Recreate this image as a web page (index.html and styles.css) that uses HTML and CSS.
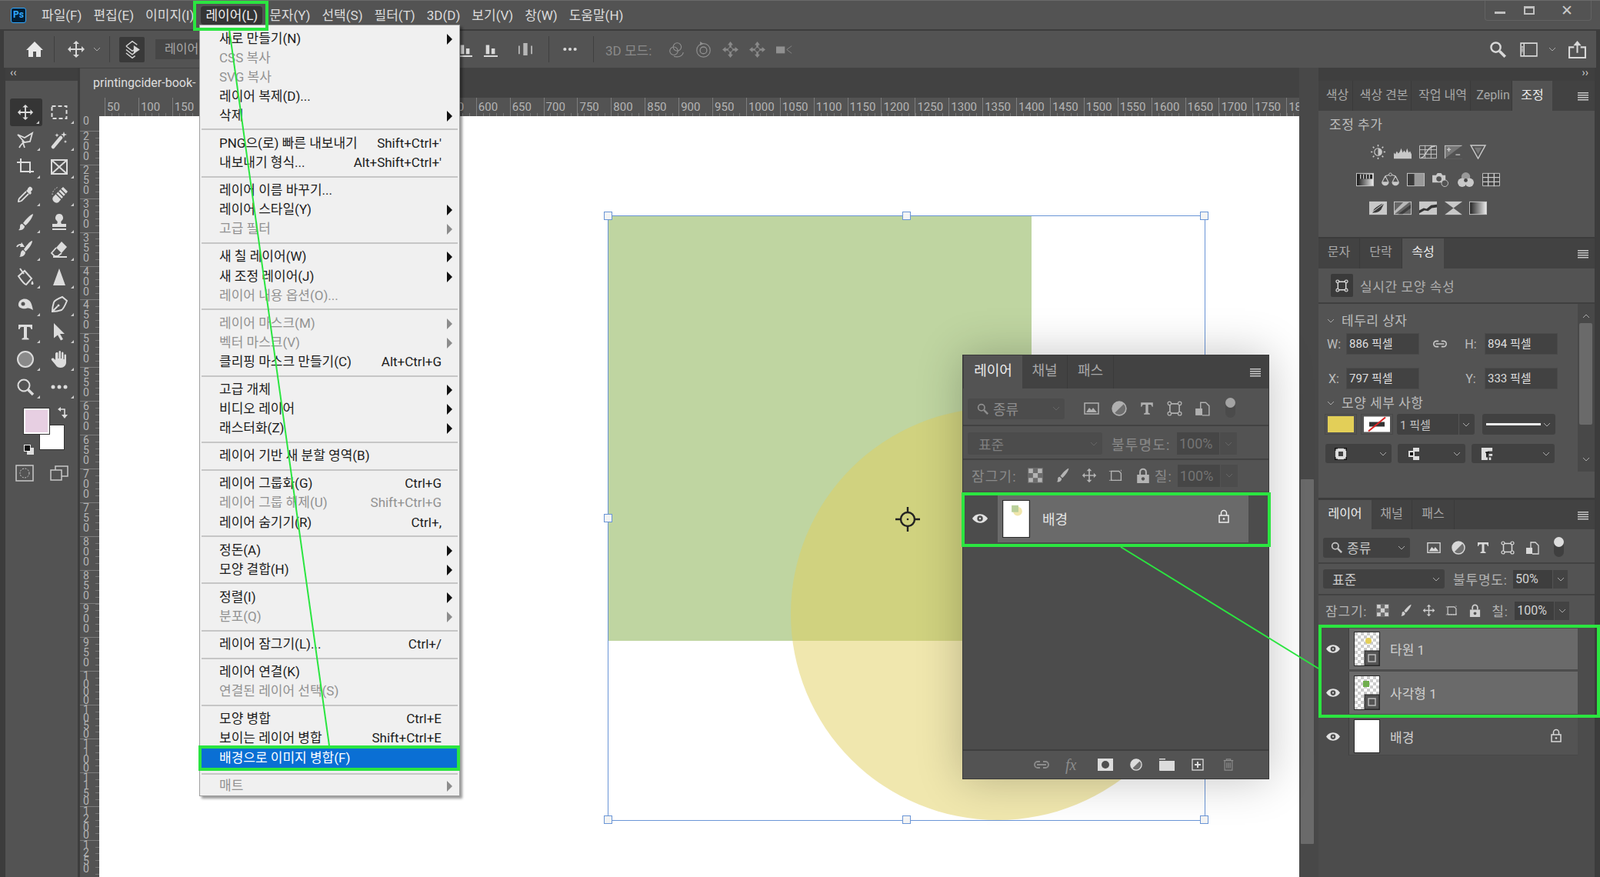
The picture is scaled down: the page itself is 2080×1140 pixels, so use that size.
FILE: index.html
```html
<!DOCTYPE html>
<html lang="ko">
<head>
    <meta charset="UTF-8">
    <title>Photoshop - 배경으로 이미지 병합</title>
    <link rel="stylesheet" href="styles.css">
</head>
<body>
<svg class="sprite" width="0" height="0">
    <defs>
        <pattern id="checker" width="8" height="8" patternUnits="userSpaceOnUse"><rect width="8" height="8" fill="#fff"/><rect width="4" height="4" fill="#ccc"/><rect x="4" y="4" width="4" height="4" fill="#ccc"/></pattern>
    </defs>
    <symbol id="home" viewBox="0 0 24 24"><path fill="currentColor" d="M12 2 1 13h3v9h6v-7h4v7h6v-9h3z"/></symbol>
    <symbol id="move" viewBox="0 0 24 24"><path fill="currentColor" d="M12 1l4 4h-3v6h6V8l4 4-4 4v-3h-6v6h3l-4 4-4-4h3v-6H5v3l-4-4 4-4v3h6V5H8z"/></symbol>
    <symbol id="marquee" viewBox="0 0 24 24"><rect x="2.5" y="4" width="19" height="16" fill="none" stroke="currentColor" stroke-width="2" stroke-dasharray="5 3"/></symbol>
    <symbol id="lasso" viewBox="0 0 24 24"><path fill="none" stroke="currentColor" stroke-width="1.8" d="M2 5l9 4 10-6-3 11-7 1zM11 15c-3 1-5 3-7 7M8 13l3 9"/></symbol>
    <symbol id="wand" viewBox="0 0 24 24"><path fill="none" stroke="currentColor" stroke-width="4.5" stroke-linecap="round" d="M4 21 14 9"/><path fill="currentColor" d="M18 1l1 3 3 1-3 1-1 3-1-3-3-1 3-1zM9 3l.7 2 2 .7-2 .7L9 8.5l-.7-2-2-.7 2-.7zM20 12l.6 1.5 1.5.6-1.5.6-.6 1.5-.6-1.5-1.5-.6 1.5-.6z"/></symbol>
    <symbol id="crop" viewBox="0 0 24 24"><path fill="none" stroke="currentColor" stroke-width="2" d="M1 6h17v14M6 1v17h17"/></symbol>
    <symbol id="frame" viewBox="0 0 24 24"><path fill="none" stroke="currentColor" stroke-width="2" d="M2 3h20v18H2zM2 3l20 18M22 3 2 21"/></symbol>
    <symbol id="dropper" viewBox="0 0 24 24"><path fill="currentColor" d="M15 4l2-2c2-1 5 2 4 4l-2 2 1 2-2 2-5-5 2-2z"/><path fill="none" stroke="currentColor" stroke-width="1.8" d="M13 8 4 17c-1 2-1 2-1 4 2 0 2 0 4-1l9-9"/></symbol>
    <symbol id="heal" viewBox="0 0 24 24"><path fill="currentColor" d="M17 2l6 6-12 14c-2 1-4 1-6-1s-2-4-1-6z"/><path stroke="#535353" stroke-width="1.5" d="M11 8l7 7M8 11l7 7M14 5l7 7"/><path fill="none" stroke="currentColor" stroke-dasharray="1.5 2" d="M3 12c0-4 3-8 8-10"/></symbol>
    <symbol id="brush" viewBox="0 0 24 24"><path fill="currentColor" d="M22 1c0 4-6 12-10 15l-3-3c3-4 9-11 13-12zM8 14l3 3c0 3-3 6-8 5 2-1 2-3 2-5 0-2 1-3 3-3z"/></symbol>
    <symbol id="stamp" viewBox="0 0 24 24"><path fill="currentColor" d="M12 1a5 5 0 0 1 3 9c-1 1-1 3 0 4h6v4H3v-4h6c1-1 1-3 0-4a5 5 0 0 1 3-9zM3 20h18v2H3z"/></symbol>
    <symbol id="hbrush" viewBox="0 0 24 24"><path fill="currentColor" d="M21 1c0 4-5 11-9 14l-2-3c3-4 7-10 11-11zM9 13l3 3c0 3-3 6-8 6 2-1 1-3 2-5 0-2 1-3 3-4z"/><path fill="none" stroke="currentColor" stroke-width="2" d="M1 9c1-3 5-4 8-2"/><path fill="currentColor" d="M11 9 7 3 5 9z"/></symbol>
    <symbol id="eraser" viewBox="0 0 24 24"><path fill="currentColor" d="M15 2l7 7-7 8-7-7z"/><path fill="none" stroke="currentColor" stroke-width="1.8" d="M8 10l-6 7 4 4h4l5-4M4 22h18"/></symbol>
    <symbol id="bucket" viewBox="0 0 24 24"><path fill="none" stroke="currentColor" stroke-width="2" d="M3 11l8-7 9 10-7 8c-2 0-8-8-10-11zM5 1l5 7"/><path fill="currentColor" d="M21 17c2 3 2 5 0 5s-2-2 0-5z"/></symbol>
    <symbol id="tri" viewBox="0 0 24 24"><path fill="currentColor" d="M12 1l8 22H4z"/></symbol>
    <symbol id="blob" viewBox="0 0 24 24"><path fill="currentColor" d="M3 11c1-6 8-8 13-5 4 2 5 9 6 13-4-2-5-3-9-2-5 1-11-1-10-6z"/><circle cx="9" cy="11" r="2.5" fill="#535353"/></symbol>
    <symbol id="pen" viewBox="0 0 24 24"><path fill="none" stroke="currentColor" stroke-width="2" d="M22 7 16 2C11 4 6 6 5 9c-1 3-2 8-2 12 4 0 9-1 12-2 3-2 5-7 7-12zM3 21l7-7"/><circle cx="11" cy="13" r="1.5" fill="currentColor"/></symbol>
    <symbol id="type" viewBox="0 0 24 24"><path fill="currentColor" d="M3 3h18v6h-1.5c-.5-2-1-3-3-3H14v14l2.5 1v1.5h-9V21l2.5-1V6H7.5c-2 0-2.5 1-3 3H3z"/></symbol>
    <symbol id="arrow" viewBox="0 0 24 24"><path fill="currentColor" d="M5 1l14 14h-6l4 7-3 1.5-4-7-5 4z"/></symbol>
    <symbol id="ellipse" viewBox="0 0 24 24"><circle cx="12" cy="12" r="10" fill="#8a8a8a" stroke="currentColor" stroke-width="2"/></symbol>
    <symbol id="hand" viewBox="0 0 24 24"><path fill="currentColor" d="M9 3c1 0 1.5.5 1.5 1.5V11h1V2.5c0-2 2.5-2 2.5 0V11h1V4c0-2 2.5-2 2.5 0v8h1V7c0-2 2.5-2 2.5 0v9c0 4-3 7-7 7-3 0-5-1-7-4l-5-6c-1-2 1-3 3-2l2 2V4.5C7.5 3.5 8 3 9 3z"/></symbol>
    <symbol id="zoom" viewBox="0 0 24 24"><circle cx="10" cy="10" r="7.5" fill="none" stroke="currentColor" stroke-width="2"/><path stroke="currentColor" stroke-width="3.5" d="M15 15l7 7"/></symbol>
    <symbol id="dots" viewBox="0 0 24 24"><circle cx="4" cy="12" r="2.5" fill="currentColor"/><circle cx="12" cy="12" r="2.5" fill="currentColor"/><circle cx="20" cy="12" r="2.5" fill="currentColor"/></symbol>
    <symbol id="eye" viewBox="0 0 24 16"><path fill="currentColor" d="M12 1c6 0 10 4 12 7-2 3-6 7-12 7S2 11 0 8c2-3 6-7 12-7z"/><circle cx="12" cy="8" r="4.5" fill="#4d4d4d"/><circle cx="12" cy="8" r="1.5" fill="currentColor"/></symbol>
    <symbol id="menu" viewBox="0 0 14 12"><path fill="currentColor" d="M0 0h14v1.5H0zM0 3h14v1.5H0zM0 6h14v1.5H0zM0 9h14v1.5H0z"/></symbol>
    <symbol id="chev" viewBox="0 0 10 6"><path fill="none" stroke="currentColor" d="M1 1l4 4 4-4"/></symbol>
    <symbol id="search" viewBox="0 0 18 18"><circle cx="7" cy="7" r="5" fill="none" stroke="currentColor" stroke-width="2"/><path stroke="currentColor" stroke-width="3" d="M11 11l6 6"/></symbol>
    <symbol id="img" viewBox="0 0 20 18"><rect x="1" y="2" width="18" height="14" fill="none" stroke="currentColor" stroke-width="1.5"/><path fill="currentColor" d="M3 14l4-6 3 3 2-3 5 6z"/></symbol>
    <symbol id="adj" viewBox="0 0 18 18"><circle cx="9" cy="9" r="8" fill="#6f6f6f" stroke="currentColor" stroke-width="1.5"/><path fill="currentColor" d="M14.7 3.3A8 8 0 0 0 3.3 14.7z"/></symbol>
    <symbol id="t" viewBox="0 0 18 18"><path fill="currentColor" d="M2 2h14v5h-1c-.5-2-1-2.5-3-2.5h-1.5V14l2 .8V16h-7v-1.2l2-.8V4.500H6c-2 0-2.5.5-3 2.5H2z"/></symbol>
    <symbol id="shape" viewBox="0 0 18 18"><path fill="none" stroke="currentColor" stroke-width="1.5" d="M3.5 3.5h11v11h-11z"/><g fill="#535353" stroke="currentColor" stroke-width="1.2"><circle cx="3" cy="3" r="2"/><circle cx="15" cy="3" r="2"/><circle cx="3" cy="15" r="2"/><circle cx="15" cy="15" r="2"/></g></symbol>
    <symbol id="smart" viewBox="0 0 18 18"><path fill="none" stroke="currentColor" stroke-width="1.3" d="M7 9V2h6l4 4v11H9"/><rect x="1" y="9" width="8" height="8" fill="currentColor"/></symbol>
    <symbol id="lock" viewBox="0 0 16 18"><path fill="none" stroke="currentColor" stroke-width="1.5" d="M4.5 8V5a3.5 3.5 0 0 1 7 0v3M2 8h12v9H2z"/><circle cx="8" cy="12.5" r="1.3" fill="currentColor"/></symbol>
    <symbol id="lockf" viewBox="0 0 16 18"><path fill="none" stroke="currentColor" stroke-width="1.8" d="M4.5 8V5a3.5 3.5 0 0 1 7 0v3"/><path fill="currentColor" fill-rule="evenodd" d="M1 8h14v10H1zM8 11a2 2 0 1 0 .01 0z"/></symbol>
    <symbol id="lockpx" viewBox="0 0 16 16"><rect width="16" height="16" fill="#6b6b6b"/><path fill="currentColor" d="M1 1h4.5v4.5H1zM10.5 1H15v4.5h-4.500zM5.500 5.500h5v5h-5zM1 10.500h4.500V15H1zM10.500 10.500H15V15h-4.500z"/></symbol>
    <symbol id="lart" viewBox="0 0 22 18"><path fill="none" stroke="currentColor" stroke-width="1.5" d="M4 3h11l3 3v10H4z"/><path fill="none" stroke="currentColor" stroke-dasharray="2 2" d="M1 3h3M18 1v3M1 16h20M4 14v4M18 14v4"/></symbol>
    <symbol id="link" viewBox="0 0 22 12"><path fill="none" stroke="currentColor" stroke-width="1.8" d="M9 2H6a4 4 0 0 0 0 8h3M13 2h3a4 4 0 0 1 0 8h-3M5 6h12"/></symbol>
    <symbol id="mask" viewBox="0 0 20 16"><rect width="20" height="16" fill="currentColor"/><circle cx="10" cy="8" r="5" fill="#4d4d4d"/></symbol>
    <symbol id="folder" viewBox="0 0 20 16"><path fill="currentColor" d="M0 0h8v1.5H0zM0 3h20v13H1a1 1 0 0 1-1-1z"/></symbol>
    <symbol id="plus" viewBox="0 0 16 16"><rect x="1" y="1" width="14" height="14" fill="none" stroke="currentColor" stroke-width="1.3"/><path fill="currentColor" d="M7 4h2v3h3v2H9v3H7V9H4V7h3z"/></symbol>
    <symbol id="trash" viewBox="0 0 16 18"><path fill="none" stroke="currentColor" stroke-width="1.3" d="M1 3h14M5 3V1h6v2M2.5 3v14h11V3M5.5 6v8M8 6v8M10.5 6v8"/></symbol>
    <symbol id="share" viewBox="0 0 22 22"><path fill="none" stroke="currentColor" stroke-width="2" d="M7 8H1v13h20V8h-6M11 15V2"/><path fill="currentColor" d="M11 0l5 6H6z"/></symbol>
    <symbol id="wspace" viewBox="0 0 22 18"><path fill="none" stroke="currentColor" stroke-width="1.5" d="M1 1h20v16H1zM5 1v16"/><path stroke="currentColor" stroke-width="2" d="M3 5v8" stroke-dasharray="1.5 1"/></symbol>
    <symbol id="sun" viewBox="0 0 24 24"><circle cx="12" cy="12" r="6" fill="none" stroke="currentColor" stroke-width="1.5"/><path fill="currentColor" d="M12 6a6 6 0 0 1 0 12z"/><path stroke="currentColor" stroke-width="2" d="M12 0v3M12 21v3M0 12h3M21 12h3M3.5 3.5l2 2M18.5 18.5l2 2M3.5 20.5l2-2M18.5 5.5l2-2"/></symbol>
    <symbol id="levels" viewBox="0 0 24 18"><path fill="currentColor" d="M0 18v-8l2 2 2-4 2 3 2-2 2-5 2 6 2-3 2 3 2-6 2 6 2-2 2 4v6z"/></symbol>
    <symbol id="curves" viewBox="0 0 24 18"><path fill="none" stroke="currentColor" d="M.5.5h23v17H.5zM8 0v18M16 0v18M0 6h24M0 12h24"/><path fill="none" stroke="currentColor" stroke-width="1.5" d="M2 17c8 0 6-15 20-16"/></symbol>
    <symbol id="expo" viewBox="0 0 24 18"><rect x=".5" y=".5" width="23" height="17" fill="#777" stroke="currentColor"/><path fill="#535353" d="M24 0v18H0z"/><path fill="currentColor" d="M5 3h1.5v2h2v1.500h-2v2H5v-2H3V5h2zM15 12h6v1.500h-6z"/></symbol>
    <symbol id="vib" viewBox="0 0 24 20"><path fill="none" stroke="currentColor" stroke-width="1.5" d="M2 1h20L12 19z"/><path fill="#777" d="M7 4h10l-5 9z"/></symbol>
    <symbol id="hue" viewBox="0 0 24 18"><defs><linearGradient id="gbw"><stop offset="0" stop-color="#111"/><stop offset="1" stop-color="#eee"/></linearGradient></defs><rect x=".5" y=".5" width="23" height="17" fill="url(#gbw)" stroke="currentColor"/><path fill="#222" d="M2 2h20v6H2z"/><path stroke="currentColor" stroke-width="1.5" d="M6 2v6M10 2v6M14 2v6M18 2v6"/></symbol>
    <symbol id="scale" viewBox="0 0 24 20"><path fill="none" stroke="currentColor" stroke-width="1.2" d="M5 5l7-2 7 2M5 5l-4 8M5 5l4 8M19 5l-4 8M19 5l4 8"/><circle cx="12" cy="3" r="2" fill="#535353" stroke="currentColor"/><path fill="currentColor" d="M0 13h10c0 7-10 7-10 0zM14 13h10c0 7-10 7-10 0z"/></symbol>
    <symbol id="bw" viewBox="0 0 24 18"><rect x=".5" y=".5" width="23" height="17" fill="#3a3a3a" stroke="currentColor"/><rect x="10" y="1" width="13" height="16" fill="#999"/></symbol>
    <symbol id="photo" viewBox="0 0 24 20"><path fill="currentColor" d="M1 4h5l2-3h5l2 3h4v10H1z"/><circle cx="10" cy="9" r="3.5" fill="#535353"/><circle cx="18" cy="15" r="4.5" fill="#535353" stroke="currentColor"/></symbol>
    <symbol id="mixer" viewBox="0 0 22 20"><circle cx="11" cy="6" r="6" fill="#999"/><circle cx="6" cy="14" r="6" fill="currentColor"/><circle cx="16" cy="14" r="6" fill="currentColor"/><circle cx="11" cy="11" r="2.5" fill="#444"/></symbol>
    <symbol id="lut" viewBox="0 0 24 18"><path fill="#444" stroke="currentColor" d="M.5.5h23v17H.5z"/><path stroke="currentColor" stroke-width="1.5" d="M8 0v18M16 0v18M0 6h24M0 12h24"/></symbol>
    <symbol id="invert" viewBox="0 0 24 18"><rect width="24" height="18" fill="currentColor"/><path fill="#3a3a3a" d="M20 3c-4 0-8 3-13 7l-3 5c5 1 9-1 12-4z"/><path stroke="#ddd" d="M2 16 21 2"/></symbol>
    <symbol id="poster" viewBox="0 0 24 18"><rect x=".5" y=".5" width="23" height="17" fill="#666" stroke="currentColor"/><path fill="#b8b8b8" d="M1 13 13 1h8L1 17z"/><path fill="#3f3f3f" d="M23 4 6 17h6L23 9z"/></symbol>
    <symbol id="thresh" viewBox="0 0 24 18"><rect width="24" height="18" fill="currentColor"/><path fill="#333" d="M0 12l6-3 4 1 6-5 8-1v4l-7 1-5 4-5-1-7 4z"/></symbol>
    <symbol id="selcol" viewBox="0 0 24 18"><rect width="24" height="18" fill="currentColor"/><path fill="#555" d="M0 0l12 9L0 18zM24 0 12 9l12 9z"/></symbol>
    <symbol id="grad" viewBox="0 0 24 18"><defs><linearGradient id="gbw2"><stop offset="0" stop-color="#222"/><stop offset="1" stop-color="#eee"/></linearGradient></defs><rect x=".5" y=".5" width="23" height="17" fill="url(#gbw2)" stroke="currentColor"/></symbol>
    <symbol id="align1" viewBox="0 0 20 22"><path fill="currentColor" d="M3 5h5v13H3zM11 10h5v8h-5zM0 20h20v2H0z"/></symbol>
    <symbol id="align2" viewBox="0 0 20 22"><path fill="currentColor" d="M0 6h2v12H0zM18 6h2v12h-2zM7 2h6v18H7z" opacity=".75"/></symbol>
    <symbol id="layers" viewBox="0 0 24 30"><path fill="none" stroke="currentColor" stroke-width="1.5" d="M3 10l9-7 7 5M3 15l9 7 4-3M3 20l9 7 4-3M3 10l9 7 3-2"/><path fill="currentColor" d="M14 9l9 6-9 6z"/></symbol>
    <symbol id="cam" viewBox="0 0 26 16"><rect y="3" width="14" height="11" fill="currentColor"/><path fill="none" stroke="currentColor" d="M25 2l-8 6 8 6"/></symbol>
    <symbol id="rot3d" viewBox="0 0 24 24"><circle cx="13" cy="8" r="6" fill="none" stroke="currentColor" stroke-width="1.3"/><circle cx="8" cy="14" r="6" fill="none" stroke="currentColor" stroke-width="1.3"/><path fill="none" stroke="currentColor" stroke-width="1.3" d="M8 22c6 2 13 0 14-6"/></symbol>
    <symbol id="roll3d" viewBox="0 0 24 24"><circle cx="12" cy="13" r="10" fill="none" stroke="currentColor" stroke-width="1.3"/><circle cx="12" cy="13" r="5" fill="none" stroke="currentColor" stroke-width="1.5"/><path fill="currentColor" d="M7 0v6l5-3z"/></symbol>
    <symbol id="pan3d" viewBox="0 0 24 24"><path fill="currentColor" opacity=".9" d="M12 0l4 5h-2.500v3.500H12zM12 24l4-5h-2.500v-3.500H12zM12 0 8 5h2.500v3.500H12zM12 24l-4-5h2.500v-3.500H12zM0 12l5-4v2.500h3.500v3H5V16zM24 12l-5-4v2.500h-3.500v3H19V16z"/><circle cx="12" cy="12" r="3.5" fill="none" stroke="currentColor"/></symbol>
</svg>

<div class="app">
    <header class="menubar">
        <span class="ps-logo">Ps</span>
        <nav class="menus">
            <span>파일(F)</span><span>편집(E)</span><span>이미지(I)</span><span class="on">레이어(L)</span><span>문자(Y)</span><span>선택(S)</span><span>필터(T)</span><span>3D(D)</span><span>보기(V)</span><span>창(W)</span><span>도움말(H)</span>
        </nav>
        <div class="winbtns">
            <i class="win-min"></i><i class="win-max"></i><b class="win-close">✕</b>
        </div>
    </header>

    <div class="optbar">
        <svg class="ic ic-home"><use href="#home"/></svg>
        <em class="vsep"></em>
        <svg class="ic ic-m"><use href="#move"/></svg>
        <svg class="ic-chev"><use href="#chev"/></svg>
        <em class="vsep"></em>
        <span class="opt-btn"><svg class="ic ic-l"><use href="#layers"/></svg></span>
        <span class="opt-input">레이어</span>
        <div class="opt-align">
            <svg class="ic ic-a"><use href="#align1"/></svg>
            <svg class="ic ic-a"><use href="#align1"/></svg>
            <svg class="ic ic-a"><use href="#align2"/></svg>
            <em class="vsep"></em>
            <svg class="ic ic-dots"><use href="#dots"/></svg>
            <em class="vsep"></em>
        </div>
        <div class="opt-3d">
            <span>3D 모드:</span>
            <svg class="ic"><use href="#rot3d"/></svg>
            <svg class="ic"><use href="#roll3d"/></svg>
            <svg class="ic"><use href="#pan3d"/></svg>
            <svg class="ic"><use href="#pan3d"/></svg>
            <svg class="ic"><use href="#cam"/></svg>
        </div>
        <div class="opt-right">
            <svg class="ic ic-s"><use href="#search"/></svg>
            <svg class="ic ic-w"><use href="#wspace"/></svg>
            <svg class="ic-chev"><use href="#chev"/></svg>
            <svg class="ic ic-sh"><use href="#share"/></svg>
        </div>
    </div>

    <main class="work">
        <aside class="tools">
            <div class="collapse">‹‹</div>
            <div class="grip"></div>
            <div class="tool-grid">
                <span class="tool active"><svg><use href="#move"/></svg></span>
                <span class="tool"><svg><use href="#marquee"/></svg></span>
                <span class="tool"><svg><use href="#lasso"/></svg></span>
                <span class="tool"><svg><use href="#wand"/></svg></span>
                <span class="tool"><svg><use href="#crop"/></svg></span>
                <span class="tool"><svg><use href="#frame"/></svg></span>
                <span class="tool"><svg><use href="#dropper"/></svg></span>
                <span class="tool"><svg><use href="#heal"/></svg></span>
                <span class="tool"><svg><use href="#brush"/></svg></span>
                <span class="tool"><svg><use href="#stamp"/></svg></span>
                <span class="tool"><svg><use href="#hbrush"/></svg></span>
                <span class="tool"><svg><use href="#eraser"/></svg></span>
                <span class="tool"><svg><use href="#bucket"/></svg></span>
                <span class="tool"><svg><use href="#tri"/></svg></span>
                <span class="tool"><svg><use href="#blob"/></svg></span>
                <span class="tool"><svg><use href="#pen"/></svg></span>
                <span class="tool"><svg><use href="#type"/></svg></span>
                <span class="tool"><svg><use href="#arrow"/></svg></span>
                <span class="tool"><svg><use href="#ellipse"/></svg></span>
                <span class="tool"><svg><use href="#hand"/></svg></span>
                <span class="tool"><svg><use href="#zoom"/></svg></span>
                <span class="tool"><svg><use href="#dots"/></svg></span>
            </div>
            <div class="swatches">
                <i class="bg-swatch"></i><i class="fg-swatch"></i><i class="def-swatch"></i>
                <svg class="swap" viewBox="0 0 14 16"><path fill="none" stroke="currentColor" stroke-width="1.6" d="M2 3h7v9"/><path fill="currentColor" d="M4 0v6L0 3zM5 10h8l-4 5z"/></svg>
            </div>
            <div class="mode-row">
                <svg viewBox="0 0 24 22"><rect x="1" y="1" width="22" height="20" fill="none" stroke="currentColor" stroke-width="1.5"/><circle cx="12" cy="11" r="6" fill="none" stroke="currentColor" stroke-dasharray="2 1.5"/></svg>
                <svg viewBox="0 0 24 22"><path fill="none" stroke="currentColor" stroke-width="1.5" d="M1 7h14v13H1zM7 7V2h16v13h-8"/></svg>
            </div>
        </aside>

        <section class="doc">
            <div class="doc-tabs"><span class="doc-tab">printingcider-book-</span></div>
            <div class="hruler">
                <span>50</span><span>100</span><span>150</span><span>200</span><span>250</span><span>300</span><span>350</span><span>400</span><span>450</span><span>500</span><span>550</span><span>600</span><span>650</span><span>700</span><span>750</span><span>800</span><span>850</span><span>900</span><span>950</span><span>1000</span><span>1050</span><span>1100</span><span>1150</span><span>1200</span><span>1250</span><span>1300</span><span>1350</span><span>1400</span><span>1450</span><span>1500</span><span>1550</span><span>1600</span><span>1650</span><span>1700</span><span>1750</span><span class="last">18</span>
            </div>
            <div class="doc-body">
                <div class="vruler">
                    <span class="first">0</span><span>200</span><span>250</span><span>300</span><span>350</span><span>400</span><span>450</span><span>500</span><span>550</span><span>600</span><span>650</span><span>700</span><span>750</span><span>800</span><span>850</span><span>900</span><span>950</span><span class="w">1000</span><span class="w">1050</span><span class="w">1100</span><span class="w">1150</span><span class="w">1200</span><span class="w">1250</span>
                </div>
                <div class="canvas">
                    <div class="shape-rect"></div>
                    <div class="shape-circle"></div>
                    <div class="bbox">
                        <i class="h h-tl"></i><i class="h h-tc"></i><i class="h h-tr"></i>
                        <i class="h h-ml"></i><i class="h h-mr"></i>
                        <i class="h h-bl"></i><i class="h h-bc"></i><i class="h h-br"></i>
                        <svg class="cross" viewBox="0 0 34 34"><circle cx="17" cy="17" r="9" fill="none" stroke="#222" stroke-width="2.4"/><circle cx="17" cy="17" r="1.3" fill="#222"/><path stroke="#222" stroke-width="2.4" d="M17 1v8M17 25v8M1 17h8M25 17h8"/></svg>
                    </div>
                </div>
            </div>
        </section>

        <div class="vscroll"><i></i></div>

        <aside class="dock">
            <div class="dock-top">››</div>

            <section class="panel panel-adj">
                <div class="tabs">
                    <span class="w45">색상</span><span class="w76">색상 견본</span><span class="w77">작업 내역</span><span class="w54">Zeplin</span><span class="w52 on">조정</span>
                    <svg class="ham"><use href="#menu"/></svg>
                </div>
                <div class="adj-title">조정 추가</div>
                <div class="adj-row"><svg><use href="#sun"/></svg><svg><use href="#levels"/></svg><svg><use href="#curves"/></svg><svg><use href="#expo"/></svg><svg><use href="#vib"/></svg></div>
                <div class="adj-row"><svg><use href="#hue"/></svg><svg><use href="#scale"/></svg><svg><use href="#bw"/></svg><svg><use href="#photo"/></svg><svg><use href="#mixer"/></svg><svg><use href="#lut"/></svg></div>
                <div class="adj-row"><svg><use href="#invert"/></svg><svg><use href="#poster"/></svg><svg><use href="#thresh"/></svg><svg><use href="#selcol"/></svg><svg><use href="#grad"/></svg></div>
            </section>

            <section class="panel panel-prop">
                <div class="tabs">
                    <span class="w54">문자</span><span class="w55">단락</span><span class="w54 on">속성</span>
                    <svg class="ham"><use href="#menu"/></svg>
                </div>
                <div class="live-row">
                    <span class="live-ic"><svg><use href="#shape"/></svg></span>
                    <span>실시간 모양 속성</span>
                </div>
                <div class="prop-body">
                    <div class="prop-main">
                        <div class="prop-head"><svg class="ic-chev"><use href="#chev"/></svg>테두리 상자</div>
                        <div class="xy-row">
                            <label>W:</label><span class="field">886 픽셀</span>
                            <svg class="chain"><use href="#link"/></svg>
                            <label>H:</label><span class="field">894 픽셀</span>
                        </div>
                        <div class="xy-row xy-2">
                            <label>X:</label><span class="field">797 픽셀</span>
                            <i class="chain"></i>
                            <label>Y:</label><span class="field">333 픽셀</span>
                        </div>
                        <div class="prop-head head-2"><svg class="ic-chev"><use href="#chev"/></svg>모양 세부 사항</div>
                        <div class="stroke-row">
                            <span class="sw"><i class="sw-yellow"></i></span>
                            <span class="sw"><svg class="sw-none" viewBox="0 0 34 20"><rect width="34" height="20" fill="#fff"/><rect x="7" y="7" width="20" height="6" fill="#333"/><path stroke="#d22" stroke-width="2" d="M6 19 28 1"/></svg></span>
                            <span class="sel sel-px">1 픽셀<em></em><svg class="ic-chev"><use href="#chev"/></svg></span>
                            <span class="sel sel-line"><i></i><svg class="ic-chev"><use href="#chev"/></svg></span>
                        </div>
                        <div class="stroke-row row-3">
                            <span class="sel s1"><svg viewBox="0 0 16 16"><path fill="none" stroke="#ddd" stroke-width="4" d="M3 3h10v10H3z"/><path fill="#111" d="M0 0h4v1.5H1.5V4H0zM12 0h4v4h-1.5V1.5H12zM0 12h1.5v2.5H4V16H0zM14.5 12H16v4h-4v-1.5h2.500z"/></svg><svg class="ic-chev"><use href="#chev"/></svg></span>
                            <span class="sel s2"><svg viewBox="0 0 14 16"><path fill="#ddd" d="M6 0h8v5H8v6h6v5H6v-4H0V4h6z"/><rect x="2" y="6" width="4" height="4" fill="#111"/></svg><svg class="ic-chev"><use href="#chev"/></svg></span>
                            <span class="sel s3"><svg viewBox="0 0 16 18"><path fill="#ddd" d="M0 0h16v5H9v13H0zM11 9h5v3h-5zM11 14h3v4h-3z"/><path stroke="#111" stroke-width="2" d="M6 7h5M8 7v7"/></svg><svg class="ic-chev"><use href="#chev"/></svg></span>
                        </div>
                    </div>
                    <div class="prop-scroll"><svg class="ar-up"><use href="#chev"/></svg><i></i><svg class="ar-dn"><use href="#chev"/></svg></div>
                </div>
            </section>

            <section class="panel panel-layers">
                <div class="tabs">
                    <span class="w69 on">레이어</span><span class="w53">채널</span><span class="w55">패스</span>
                    <svg class="ham"><use href="#menu"/></svg>
                </div>
                <div class="row-filter">
                    <span class="sel kind"><svg class="mag"><use href="#search"/></svg>종류<svg class="ic-chev"><use href="#chev"/></svg></span>
                    <div class="kind-ics">
                        <svg><use href="#img"/></svg><svg><use href="#adj"/></svg><svg><use href="#t"/></svg><svg><use href="#shape"/></svg><svg><use href="#smart"/></svg>
                    </div>
                    <span class="toggle"><i></i></span>
                </div>
                <div class="row-blend">
                    <span class="sel blend">표준<svg class="ic-chev"><use href="#chev"/></svg></span>
                    <label>불투명도:</label>
                    <span class="num">50%</span><span class="num-btn"><svg class="ic-chev"><use href="#chev"/></svg></span>
                </div>
                <div class="row-lock">
                    <label>잠그기:</label>
                    <div class="lock-ics"><svg><use href="#lockpx"/></svg><svg><use href="#brush"/></svg><svg><use href="#move"/></svg><svg><use href="#lart"/></svg><svg><use href="#lockf"/></svg></div>
                    <label>칠:</label>
                    <span class="num">100%</span><span class="num-btn"><svg class="ic-chev"><use href="#chev"/></svg></span>
                </div>
                <div class="layer-list">
                    <div class="layer picked">
                        <span class="eye"><svg><use href="#eye"/></svg></span>
                        <div class="layer-main">
                            <svg class="thumb" viewBox="0 0 32 43"><rect width="32" height="43" fill="url(#checker)"/><circle cx="18" cy="11" r="4" fill="#e4cf58"/><rect x="13" y="24" width="19" height="19" fill="#555" stroke="#222"/><path fill="none" stroke="#bbb" stroke-width="1.5" d="M18 29h9v9h-9z"/></svg>
                            <span class="layer-name">타원 1</span>
                        </div>
                    </div>
                    <div class="layer picked l2">
                        <span class="eye"><svg><use href="#eye"/></svg></span>
                        <div class="layer-main">
                            <svg class="thumb" viewBox="0 0 32 43"><rect width="32" height="43" fill="url(#checker)"/><rect x="11" y="6" width="8" height="8" fill="#6fae4d"/><rect x="13" y="24" width="19" height="19" fill="#555" stroke="#222"/><path fill="none" stroke="#bbb" stroke-width="1.5" d="M18 29h9v9h-9z"/></svg>
                            <span class="layer-name">사각형 1</span>
                        </div>
                    </div>
                    <div class="layer l3">
                        <span class="eye"><svg><use href="#eye"/></svg></span>
                        <div class="layer-main">
                            <i class="thumb white"></i>
                            <span class="layer-name">배경</span>
                            <svg class="layer-lock"><use href="#lock"/></svg>
                        </div>
                    </div>
                </div>
            </section>
        </aside>
    </main>

    <ul class="dropdown">
        <li class="sub">새로 만들기(N)</li>
        <li class="off">CSS 복사</li>
        <li class="off">SVG 복사</li>
        <li>레이어 복제(D)...</li>
        <li class="sub">삭제</li>
        <li class="sep"></li>
        <li>PNG으(로) 빠른 내보내기<kbd>Shift+Ctrl+'</kbd></li>
        <li>내보내기 형식...<kbd>Alt+Shift+Ctrl+'</kbd></li>
        <li class="sep"></li>
        <li>레이어 이름 바꾸기...</li>
        <li class="sub">레이어 스타일(Y)</li>
        <li class="sub off">고급 필터</li>
        <li class="sep"></li>
        <li class="sub">새 칠 레이어(W)</li>
        <li class="sub">새 조정 레이어(J)</li>
        <li class="off">레이어 내용 옵션(O)...</li>
        <li class="sep"></li>
        <li class="sub off">레이어 마스크(M)</li>
        <li class="sub off">벡터 마스크(V)</li>
        <li>클리핑 마스크 만들기(C)<kbd>Alt+Ctrl+G</kbd></li>
        <li class="sep"></li>
        <li class="sub">고급 개체</li>
        <li class="sub">비디오 레이어</li>
        <li class="sub">래스터화(Z)</li>
        <li class="sep"></li>
        <li>레이어 기반 새 분할 영역(B)</li>
        <li class="sep"></li>
        <li>레이어 그룹화(G)<kbd>Ctrl+G</kbd></li>
        <li class="off">레이어 그룹 해제(U)<kbd>Shift+Ctrl+G</kbd></li>
        <li>레이어 숨기기(R)<kbd>Ctrl+,</kbd></li>
        <li class="sep"></li>
        <li class="sub">정돈(A)</li>
        <li class="sub">모양 결합(H)</li>
        <li class="sep"></li>
        <li class="sub">정렬(I)</li>
        <li class="sub off">분포(Q)</li>
        <li class="sep"></li>
        <li>레이어 잠그기(L)...<kbd>Ctrl+/</kbd></li>
        <li class="sep"></li>
        <li>레이어 연결(K)</li>
        <li class="off">연결된 레이어 선택(S)</li>
        <li class="sep"></li>
        <li>모양 병합<kbd>Ctrl+E</kbd></li>
        <li>보이는 레이어 병합<kbd>Shift+Ctrl+E</kbd></li>
        <li class="hot">배경으로 이미지 병합(F)</li>
        <li class="sep sep-hot"></li>
        <li class="sub off">매트</li>
    </ul>

    <section class="float-panel">
        <div class="tabs">
            <span class="w76 on">레이어</span><span class="w59">채널</span><span class="w60">패스</span>
            <svg class="ham"><use href="#menu"/></svg>
        </div>
        <div class="row-filter">
            <span class="sel kind"><svg class="mag"><use href="#search"/></svg>종류<svg class="ic-chev"><use href="#chev"/></svg></span>
            <div class="kind-ics">
                <svg><use href="#img"/></svg><svg><use href="#adj"/></svg><svg><use href="#t"/></svg><svg><use href="#shape"/></svg><svg><use href="#smart"/></svg>
            </div>
            <span class="toggle"><i></i></span>
        </div>
        <div class="row-blend">
            <span class="sel blend">표준<svg class="ic-chev"><use href="#chev"/></svg></span>
            <label>불투명도:</label>
            <span class="num">100%</span><span class="num-btn"><svg class="ic-chev"><use href="#chev"/></svg></span>
        </div>
        <div class="row-lock">
            <label>잠그기:</label>
            <div class="lock-ics"><svg><use href="#lockpx"/></svg><svg><use href="#brush"/></svg><svg><use href="#move"/></svg><svg><use href="#lart"/></svg><svg><use href="#lockf"/></svg></div>
            <label>칠:</label>
            <span class="num">100%</span><span class="num-btn"><svg class="ic-chev"><use href="#chev"/></svg></span>
        </div>
        <div class="layer-list">
            <div class="layer picked">
                <span class="eye"><svg><use href="#eye"/></svg></span>
                <div class="layer-main">
                    <svg class="thumb" viewBox="0 0 34 48"><rect width="34" height="48" fill="#fff"/><circle cx="19" cy="14" r="6" fill="#f0e6ac"/><rect x="11" y="6" width="9" height="9" fill="#b9d09a"/></svg>
                    <span class="layer-name">배경</span>
                    <svg class="layer-lock"><use href="#lock"/></svg>
                </div>
            </div>
        </div>
        <footer class="panel-foot">
            <svg class="f-dim f-link"><use href="#link"/></svg>
            <span class="f-fx">fx</span>
            <svg><use href="#mask"/></svg>
            <svg><use href="#adj"/></svg>
            <svg><use href="#folder"/></svg>
            <svg><use href="#plus"/></svg>
            <svg class="f-dim"><use href="#trash"/></svg>
        </footer>
    </section>

    <svg class="annot" viewBox="0 0 2080 1140">
        <g fill="none" stroke="#2be540" stroke-width="4">
            <rect x="253" y="3" width="94" height="35"/>
            <rect x="260" y="971" width="336" height="29"/>
            <rect x="1252" y="642" width="398" height="67"/>
            <rect x="1716" y="814" width="362" height="117"/>
        </g>
        <g stroke="#2be540" stroke-width="2">
            <line x1="298" y1="38" x2="428" y2="969"/>
            <line x1="1457" y1="711" x2="1714" y2="869"/>
        </g>
    </svg>
</div>
</body>
</html>
```

FILE: styles.css
```css
* {
    box-sizing: border-box;
}
html, body {
    margin: 0;
    height: 100%;
}
body {
    width: 2080px;
    height: 1140px;
    overflow: hidden;
    background: #3c3c3c;
    color: #d0d0d0;
    font-family: "Roboto", "Noto Sans CJK KR", sans-serif;
    font-size: 16px;
}
svg {
    display: block;
}
.sprite {
    position: absolute;
}
.app {
    position: relative;
    width: 2080px;
    height: 1140px;
    overflow: hidden;
}
.ic {
    width: 24px;
    height: 24px;
    color: #d8d8d8;
}
.ic-chev {
    width: 10px;
    height: 6px;
    color: #aaa;
    flex: none;
}

/* menu bar */
.menubar {
    height: 38px;
    background: #535353;
    border-top: 1px solid #6a6a6a;
    display: flex;
    align-items: center;
    padding-left: 14px;
}
.ps-logo {
    width: 20px;
    height: 20px;
    background: #001e36;
    border: 1.5px solid #31a8ff;
    border-radius: 3px;
    color: #31a8ff;
    font-size: 12px;
    font-weight: 700;
    line-height: 17px;
    text-align: center;
}
.menus {
    display: flex;
    gap: 15px;
    margin-left: 20px;
    font-size: 17px;
    line-height: 24px;
    color: #dcdcdc;
}
.menus span {
    white-space: nowrap;
}
.menus .on {
    background: #353535;
    border-radius: 4px;
    padding: 0 6px;
    margin: 0 -6px;
    color: #eee;
}
.winbtns {
    margin-left: auto;
    margin-right: 11px;
    width: 139px;
    height: 26px;
    align-self: flex-start;
    border: 1px solid #626262;
    border-top: 0;
    border-radius: 0 0 4px 4px;
    display: grid;
    grid-template-columns: 38px 37px 1fr;
    place-items: center;
    color: #c8c8c8;
}
.win-min {
    width: 14px;
    height: 3px;
    background: #c0c0c0;
    margin-top: 6px;
}
.win-max {
    width: 14px;
    height: 11px;
    border: 2px solid #c0c0c0;
    border-top-width: 3px;
}
.win-close {
    font-size: 19px;
    font-weight: 400;
    line-height: 24px;
}

/* options bar */
.optbar {
    height: 50px;
    margin: 0 5px;
    background: #535353;
    border-top: 2px solid #3c3c3c;
    display: flex;
    align-items: center;
    padding-left: 28px;
}
.ic-home {
    width: 24px;
    height: 24px;
    color: #e8e8e8;
}
.vsep {
    width: 1px;
    height: 34px;
    background: #404040;
    flex: none;
}
.optbar > .vsep:nth-of-type(1) {
    margin-left: 13px;
}
.ic-m {
    margin-left: 16px;
}
.optbar > .ic-chev {
    margin: 0 11px 0 10px;
}
.opt-btn {
    width: 33px;
    height: 33px;
    background: #393939;
    display: grid;
    place-items: center;
    margin-left: 12px;
    border-radius: 2px;
}
.ic-l {
    width: 22px;
    height: 27px;
}
.opt-input {
    width: 120px;
    height: 26px;
    margin-left: 14px;
    background: #464646;
    color: #a8a8a8;
    padding-left: 12px;
    line-height: 26px;
}
.opt-align {
    display: flex;
    align-items: center;
    margin-left: 274px;
}
.ic-a {
    width: 18px;
    height: 20px;
    margin-right: 15px;
}
.ic-a:nth-child(2) {
    margin-right: 27px;
}
.ic-a:nth-child(3) {
    margin-right: 21px;
}
.ic-dots {
    width: 20px;
    height: 20px;
    margin: 0 20px 0 17px;
}
.opt-3d {
    display: flex;
    align-items: center;
    gap: 14px;
    margin-left: 15px;
    color: #8a8a8a;
    font-size: 17px;
}
.opt-3d .ic {
    width: 21px;
    height: 21px;
    color: #909090;
}
.opt-3d span {
    margin-right: 8px;
    white-space: nowrap;
}
.opt-right {
    margin-left: auto;
    display: flex;
    align-items: center;
    margin-right: 13px;
}
.ic-s {
    width: 22px;
    height: 22px;
}
.ic-w {
    width: 23px;
    height: 19px;
    margin-left: 18px;
}
.opt-right .ic-chev {
    margin: 0 16px 0 14px;
}
.ic-sh {
    width: 23px;
    height: 23px;
}

/* main area */
.work {
    display: flex;
    height: 1052px;
}

/* left tool strip */
.tools {
    width: 97px;
    margin-left: 7px;
    background: #535353;
    border-right: 3px solid #3c3c3c;
    flex: none;
}
.collapse {
    height: 17px;
    background: #3f3f3f;
    font-size: 14px;
    line-height: 13px;
    padding-left: 6px;
    color: #ccc;
}
.grip {
    height: 23px;
}
.tool-grid {
    display: grid;
    grid-template-columns: 44px 44px;
    grid-auto-rows: 35.7px;
    padding-left: 5px;
}
.tool {
    position: relative;
    display: grid;
    place-items: center;
    padding-right: 3px;
    color: #dcdcdc;
}
.tool svg {
    width: 24px;
    height: 24px;
}
.tool::after {
    content: "";
    position: absolute;
    right: 4px;
    bottom: 3px;
    border: 2px solid transparent;
    border-right-color: #ccc;
    border-bottom-color: #ccc;
}
.tool.active {
    background: #353535;
    border-radius: 3px;
    margin: 0 1px;
}
.tool.active svg {
    width: 22px;
    height: 22px;
}
.swatches {
    position: relative;
    height: 73px;
    margin: 10px 0 0 24px;
}
.fg-swatch, .bg-swatch, .def-swatch {
    position: absolute;
    display: block;
}
.fg-swatch {
    left: 0;
    top: 0;
    width: 33px;
    height: 33px;
    background: #e7cfe2;
    border: 2px solid #fff;
    outline: 1px solid #333;
}
.bg-swatch {
    left: 20px;
    top: 21px;
    width: 33px;
    height: 33px;
    background: #fff;
    border: 1px solid #333;
}
.def-swatch {
    left: 0;
    top: 47px;
    width: 9px;
    height: 9px;
    background: #111;
    border: 1px solid #eee;
    box-shadow: 4px 4px 0 #ddd;
}
.swap {
    position: absolute;
    left: 44px;
    top: -2px;
    width: 14px;
    height: 16px;
    color: #ddd;
}
.mode-row {
    display: flex;
    gap: 21px;
    margin-left: 13px;
    color: #c8c8c8;
}
.mode-row svg {
    width: 24px;
    height: 22px;
}

/* document */
.doc {
    width: 1585px;
    flex: none;
    display: flex;
    flex-direction: column;
    background: #535353;
}
.doc-tabs {
    height: 39px;
    background: #424242;
    padding-top: 1px;
}
.doc-tab {
    display: block;
    width: 220px;
    height: 38px;
    background: #535353;
    padding-left: 17px;
    line-height: 38px;
    font-size: 16px;
    color: #dedede;
}
.hruler {
    height: 24px;
    display: flex;
    padding-left: 32px;
    overflow: hidden;
    font-family: "Liberation Sans Narrow", "Roboto", sans-serif;
    font-size: 15px;
    color: #b4b4b4;
    background:
        repeating-linear-gradient(90deg, #777 0 1px, transparent 1px 8.78px) 32px 100% / 100% 4px no-repeat,
        #535353;
}
.hruler span {
    width: 43.9px;
    flex: none;
    border-left: 1px solid #7d7d7d;
    padding-left: 2px;
    line-height: 25px;
}
.hruler .last {
    width: 16px;
}
.doc-body {
    flex: 1;
    display: flex;
    min-height: 0;
}
.vruler {
    width: 25px;
    flex: none;
    overflow: hidden;
    font-size: 14px;
    line-height: 13px;
    color: #b4b4b4;
    background:
        repeating-linear-gradient(180deg, #777 0 1px, transparent 1px 8.78px) 100% 19px / 5px 100% no-repeat,
        #535353;
}
.vruler span {
    display: block;
    width: 25px;
    height: 43.9px;
    padding: 0 13px 0 4px;
    word-break: break-all;
    border-top: 1px solid #7d7d7d;
}
.vruler .first {
    height: 19px;
    border-top: 0;
}
.vruler .w {
    line-height: 10.5px;
}
.canvas {
    flex: 1;
    position: relative;
    background: #fff;
    overflow: hidden;
}
.shape-rect {
    position: absolute;
    left: 661px;
    top: 129px;
    width: 551px;
    height: 553px;
    background: #bfd5a1;
}
.shape-circle {
    position: absolute;
    left: 899px;
    top: 379px;
    width: 538px;
    height: 536px;
    border-radius: 50%;
    background: #e2d05e;
    opacity: .5;
}
.bbox {
    position: absolute;
    left: 661px;
    top: 129px;
    width: 777px;
    height: 787px;
    border: 1px solid #6a95d6;
}
.h {
    position: absolute;
    width: 11px;
    height: 11px;
    background: #f4f4f4;
    border: 1.5px solid #6a95d6;
    margin: -6px 0 0 -6px;
}
.h-tl { left: 0; top: 0; }
.h-tc { left: 50%; top: 0; }
.h-tr { left: 100%; top: 0; }
.h-ml { left: 0; top: 50%; }
.h-mr { left: 100%; top: 50%; }
.h-bl { left: 0; top: 100%; }
.h-bc { left: 50%; top: 100%; }
.h-br { left: 100%; top: 100%; }
.cross {
    position: absolute;
    left: 372px;
    top: 377px;
    width: 34px;
    height: 34px;
}
.vscroll {
    width: 25px;
    flex: none;
    background: #484848;
    padding: 535px 6px 0 2px;
}
.vscroll i {
    display: block;
    height: 474px;
    background: #6a6a6a;
    border-radius: 1px;
}

/* right dock */
.dock {
    width: 359px;
    flex: none;
    display: flex;
    flex-direction: column;
    background: #3c3c3c;
}
.dock-top {
    height: 17px;
    background: #3f3f3f;
    text-align: right;
    padding-right: 8px;
    font-size: 14px;
    line-height: 13px;
    color: #ccc;
}
.panel {
    background: #535353;
}
.tabs {
    display: flex;
    background: #424242;
    font-size: 16px;
    color: #a8a8a8;
    position: relative;
}
.tabs span {
    display: block;
    text-align: center;
    border-right: 1px solid #3a3a3a;
    white-space: nowrap;
}
.tabs .on {
    background: #535353;
    color: #ececec;
    border-right: 0;
}
.ham {
    position: absolute;
    right: 8px;
    top: 15px;
    width: 14px;
    height: 12px;
    color: #c8c8c8;
}
.w45 { width: 45px; }
.w52 { width: 52px; }
.w53 { width: 53px; }
.w54 { width: 54px; }
.w55 { width: 55px; }
.w59 { width: 59px; }
.w60 { width: 60px; }
.w69 { width: 69px; }
.w76 { width: 76px; }
.w77 { width: 77px; }

.panel-adj {
    height: 203px;
}
.panel-adj .tabs span {
    line-height: 38px;
    height: 39px;
}
.panel-adj .tabs span:not(.on) {
    padding-left: 5px;
}
.adj-title {
    padding: 6px 0 0 14px;
    font-size: 17px;
    letter-spacing: .5px;
    line-height: 24px;
    color: #bdbdbd;
    height: 35px;
}
.adj-row {
    width: 285px;
    display: flex;
    justify-content: center;
    height: 36.6px;
    align-items: center;
    color: #c8c8c8;
}
.adj-row svg {
    width: 23px;
    height: 19px;
    margin: 0 4.85px;
}

.panel-prop {
    height: 337px;
    margin-top: 2px;
}
.panel-prop .tabs span {
    line-height: 36px;
    height: 39px;
}
.live-row {
    height: 46px;
    border-bottom: 2px solid #3f3f3f;
    display: flex;
    align-items: center;
    gap: 9px;
    padding-left: 16px;
    color: #aeaeae;
    font-size: 17px;
    letter-spacing: .6px;
}
.live-ic {
    width: 29px;
    height: 30px;
    background: #3a3a3a;
    border-radius: 2px;
    display: grid;
    place-items: center;
}
.live-ic svg {
    width: 17px;
    height: 17px;
    color: #ddd;
}
.prop-body {
    display: flex;
    height: 218px;
}
.prop-main {
    flex: 1;
    padding: 10px 0 0 8px;
}
.prop-head {
    display: flex;
    align-items: center;
    gap: 9px;
    font-size: 17px;
    letter-spacing: .5px;
    line-height: 24px;
    color: #bcbcbc;
    padding-left: 3px;
}
.head-2 {
    margin-top: 6px;
}
.xy-row {
    display: grid;
    grid-template-columns: 24px 95px 45px 28px 95px;
    gap: 0 4px;
    margin-top: 4px;
    align-items: center;
}
.xy-2 {
    margin-top: 17px;
}
.xy-row label {
    text-align: center;
    color: #bcbcbc;
    font-size: 16px;
}
.chain {
    width: 20px;
    height: 12px;
    justify-self: center;
    color: #c8c8c8;
}
.field {
    height: 28px;
    background: #424242;
    border: 1px solid #4b4b4b;
    font-size: 15px;
    line-height: 26px;
    padding-left: 3px;
    color: #dedede;
}
.stroke-row {
    display: flex;
    gap: 5px;
    margin-top: 2px;
    height: 27px;
}
.sw {
    width: 42px;
    height: 27px;
    border: 1px solid #484848;
    padding: 2px 3px;
}
.sw-yellow {
    display: block;
    height: 100%;
    background: #e3cf58;
}
.sw-none {
    width: 100%;
    height: 100%;
}
.sel {
    background: #414141;
    border-radius: 3px;
    display: flex;
    align-items: center;
    color: #c4c4c4;
    white-space: nowrap;
}
.sel > .ic-chev {
    margin-left: auto;
    margin-right: 6px;
}
.sel-px {
    width: 101px;
    padding-left: 4px;
    font-size: 15px;
    position: relative;
}
.sel-px em {
    position: absolute;
    left: 80px;
    top: 0;
    bottom: 0;
    width: 1px;
    background: #555;
}
.sel-line {
    width: 95px;
    margin-left: 5px;
    padding-left: 5px;
}
.sel-line i {
    display: block;
    width: 71px;
    height: 3px;
    background: #eee;
}
.row-3 {
    margin-top: 12px;
    height: 25px;
    gap: 8px;
    padding-left: 1px;
}
.row-3 .sel svg:first-child {
    width: 16px;
    height: 16px;
    margin-left: 12px;
}
.s1 { width: 86px; }
.s2 { width: 88px; }
.s3 { width: 108px; }
.row-3 .s2 svg:first-child { margin-left: 13px; }
.prop-scroll {
    width: 22px;
    height: 218px;
    background: #484848;
    position: relative;
    color: #aaa;
}
.prop-scroll i {
    position: absolute;
    left: 2px;
    top: 25px;
    width: 17px;
    height: 132px;
    background: #6a6a6a;
    border-radius: 2px;
}
.prop-scroll svg {
    position: absolute;
    left: 6px;
    width: 10px;
    height: 6px;
}
.ar-up {
    top: 13px;
    transform: rotate(180deg);
}
.ar-dn {
    top: 199px;
}

/* layers panel, docked and floating share these */
.panel-layers {
    margin-top: 3px;
    flex: 1;
    background: #4c4c4c;
}
.panel-layers .tabs span {
    height: 38px;
    line-height: 35px;
}
.row-filter, .row-blend, .row-lock {
    display: flex;
    align-items: center;
    background: #535353;
    border-bottom: 2px solid #424242;
    font-size: 16px;
}
.row-filter {
    height: 45px;
    padding: 4px 0 0 6px;
}
.kind {
    width: 113px;
    height: 26px;
    padding-left: 10px;
    gap: 6px;
    font-size: 17px;
}
.mag {
    width: 15px;
    height: 15px;
}
.kind-ics {
    display: flex;
    margin-left: 22px;
    gap: 14px;
    color: #d8d8d8;
}
.kind-ics svg {
    width: 18px;
    height: 18px;
}
.toggle {
    width: 13px;
    height: 24px;
    margin-left: 19px;
    background: #3f3f3f;
    border-radius: 7px;
    position: relative;
    display: block;
}
.toggle i {
    position: absolute;
    left: 0;
    top: -2px;
    width: 13px;
    height: 13px;
    border-radius: 50%;
    background: #ddd;
}
.row-blend {
    height: 41px;
    padding-left: 6px;
}
.blend {
    width: 158px;
    height: 25px;
    padding-left: 12px;
    color: #ccc;
    font-size: 17px;
}
.row-blend label {
    margin-left: 11px;
    width: 78px;
    color: #b4b4b4;
    white-space: nowrap;
    font-size: 17px;
    letter-spacing: .8px;
}
.num {
    width: 51px;
    height: 24px;
    background: #3e3e3e;
    line-height: 24px;
    padding-left: 3px;
    color: #d2d2d2;
    font-size: 16px;
}
.num-btn {
    width: 19px;
    height: 24px;
    margin-left: 1px;
    background: #434343;
    display: grid;
    place-items: center;
}
.row-lock {
    height: 39px;
    padding-left: 9px;
    border-bottom: 0;
}
.row-lock label {
    color: #b4b4b4;
    white-space: nowrap;
    font-size: 17px;
    letter-spacing: .8px;
}
.lock-ics {
    display: flex;
    align-items: center;
    margin-left: 12px;
    width: 150px;
    gap: 13px;
    color: #cfcfcf;
}
.lock-ics svg {
    width: 17px;
    height: 17px;
    flex: none;
}
.row-lock label:last-of-type {
    width: 30px;
}
.layer-list {
    padding-top: 4px;
}
.layer {
    height: 53px;
    display: flex;
    margin-bottom: 3px;
}
.eye {
    width: 40px;
    display: grid;
    place-items: center;
    background: #4c4c4c;
    flex: none;
    padding-right: 2px;
    color: #e2e2e2;
    border-right: 1px solid #404040;
}
.eye svg {
    width: 18px;
    height: 13px;
}
.layer-main {
    width: 297px;
    display: flex;
    align-items: center;
    padding-left: 7px;
    background: #535353;
    position: relative;
}
.picked .layer-main {
    background: #6a6a6a;
}
.thumb {
    width: 32px;
    height: 43px;
    outline: 1px solid #2c2c2c;
    flex: none;
    display: block;
}
.thumb.white {
    background: #fff;
}
.layer-name {
    margin-left: 14px;
    font-size: 17px;
    color: #cfcfcf;
}
.layer-lock {
    position: absolute;
    left: 261px;
    top: 14px;
    width: 16px;
    height: 18px;
    color: #d8d8d8;
}
.l2 {
    height: 55px;
    margin-bottom: 5px;
}
.l3 {
    height: 49px;
}
.l3 .thumb {
    height: 42px;
}
.l3 .layer-main {
    border-bottom: 1px solid #484848;
}

/* flattened floating panel */
.float-panel {
    position: absolute;
    left: 1251px;
    top: 461px;
    width: 399px;
    height: 552px;
    background: #4c4c4c;
    box-shadow: 0 0 55px rgba(0, 0, 0, .24);
    border: 1px solid #3a3a3a;
    display: flex;
    flex-direction: column;
}
.float-panel .tabs span {
    height: 43px;
    line-height: 40px;
    font-size: 18px;
}
.float-panel .tabs .on {
    margin-left: 1px;
}
.float-panel .ham {
    top: 17px;
    right: 10px;
}
.float-panel .row-filter {
    height: 49px;
    padding: 5px 0 0 6px;
}
.float-panel .kind {
    width: 126px;
    height: 27px;
    background: #4c4c4c;
    color: #8e8e8e;
    padding-left: 12px;
    font-size: 18px;
}
.float-panel .kind .ic-chev {
    color: #666;
}
.float-panel .kind-ics {
    margin-left: 25px;
    gap: 16px;
    color: #b0b0b0;
}
.float-panel .kind-ics svg {
    width: 20px;
    height: 20px;
}
.float-panel .toggle {
    margin-left: 20px;
    background: #4b4b4b;
}
.float-panel .toggle i {
    background: #a4a4a4;
}
.float-panel .row-blend {
    height: 44px;
    padding-top: 3px;
}
.float-panel .blend {
    width: 175px;
    height: 29px;
    background: #4c4c4c;
    color: #808080;
    padding-left: 14px;
    font-size: 18px;
}
.float-panel .blend .ic-chev {
    color: #666;
}
.float-panel .row-blend label, .float-panel .row-lock label {
    color: #8a8a8a;
    font-size: 18px;
    letter-spacing: 1.2px;
}
.float-panel .row-blend label {
    width: 85px;
    margin-left: 12px;
}
.float-panel .num {
    width: 55px;
    height: 29px;
    line-height: 29px;
    background: #464646;
    color: #747474;
    font-size: 18px;
}
.float-panel .num-btn {
    width: 22px;
    height: 29px;
    background: #4c4c4c;
}
.float-panel .num-btn .ic-chev {
    color: #666;
}
.float-panel .row-lock {
    height: 40px;
    padding-left: 11px;
}
.float-panel .lock-ics {
    margin-left: 14px;
    width: 165px;
    gap: 15px;
    color: #b4b4b4;
}
.float-panel .lock-ics svg {
    width: 20px;
    height: 20px;
}
.float-panel .layer-list {
    flex: 1;
    padding-top: 5px;
}
.float-panel .layer {
    height: 62px;
}
.float-panel .eye {
    width: 45px;
    border-right: 0;
}
.float-panel .eye svg {
    width: 20px;
    height: 14px;
}
.float-panel .layer-main {
    width: 326px;
}
.float-panel .thumb {
    width: 34px;
    height: 47px;
}
.float-panel .layer-name {
    margin-left: 17px;
    color: #e4e4e4;
    font-size: 18px;
}
.float-panel .layer-lock {
    left: 286px;
    top: 19px;
    color: #eee;
}
.panel-foot {
    height: 38px;
    background: #535353;
    border-top: 2px solid #3f3f3f;
    display: flex;
    align-items: center;
    padding-left: 91px;
    gap: 20px;
    color: #dcdcdc;
}
.panel-foot svg {
    width: 20px;
    height: 16px;
    flex: none;
}
.panel-foot .f-dim {
    color: #8c8c8c;
}
.panel-foot .f-link {
    width: 22px;
    height: 12px;
}
.f-fx {
    font-family: "Liberation Serif", serif;
    font-style: italic;
    font-size: 20px;
    color: #8c8c8c;
    width: 22px;
    line-height: 20px;
}

/* layer menu */
.dropdown {
    position: absolute;
    left: 259px;
    top: 32px;
    width: 339px;
    height: 1003px;
    margin: 0;
    padding: 4.5px 0 0;
    list-style: none;
    background: #f0f0f0;
    border: 1px solid #a0a0a0;
    box-shadow: 3px 3px 3px rgba(0, 0, 0, .4);
    color: #1c1c1c;
    font-size: 17px;
}
.dropdown li {
    height: 25.1px;
    line-height: 25px;
    padding: 0 23px 0 25px;
    display: flex;
    white-space: nowrap;
    position: relative;
}
.dropdown .off {
    color: #929292;
}
.dropdown kbd {
    margin-left: auto;
    font-family: inherit;
    font-size: 17px;
}
.dropdown .sub::after {
    content: "";
    position: absolute;
    right: 9px;
    top: 6px;
    border-left: 7px solid #111;
    border-top: 7px solid transparent;
    border-bottom: 7px solid transparent;
}
.dropdown .sub.off::after {
    border-left-color: #8c8c8c;
}
.dropdown .sep {
    height: 2px;
    margin: 4.5px 2px;
    padding: 0;
    background: #c6c6c6;
}
.dropdown .hot {
    background: #0a6fd4;
    color: #fff;
}
.dropdown .sep-hot {
    margin: 7px 2px 2px;
}

/* annotations drawn over the screenshot */
.annot {
    position: absolute;
    left: 0;
    top: 0;
    width: 2080px;
    height: 1140px;
    pointer-events: none;
}
```
